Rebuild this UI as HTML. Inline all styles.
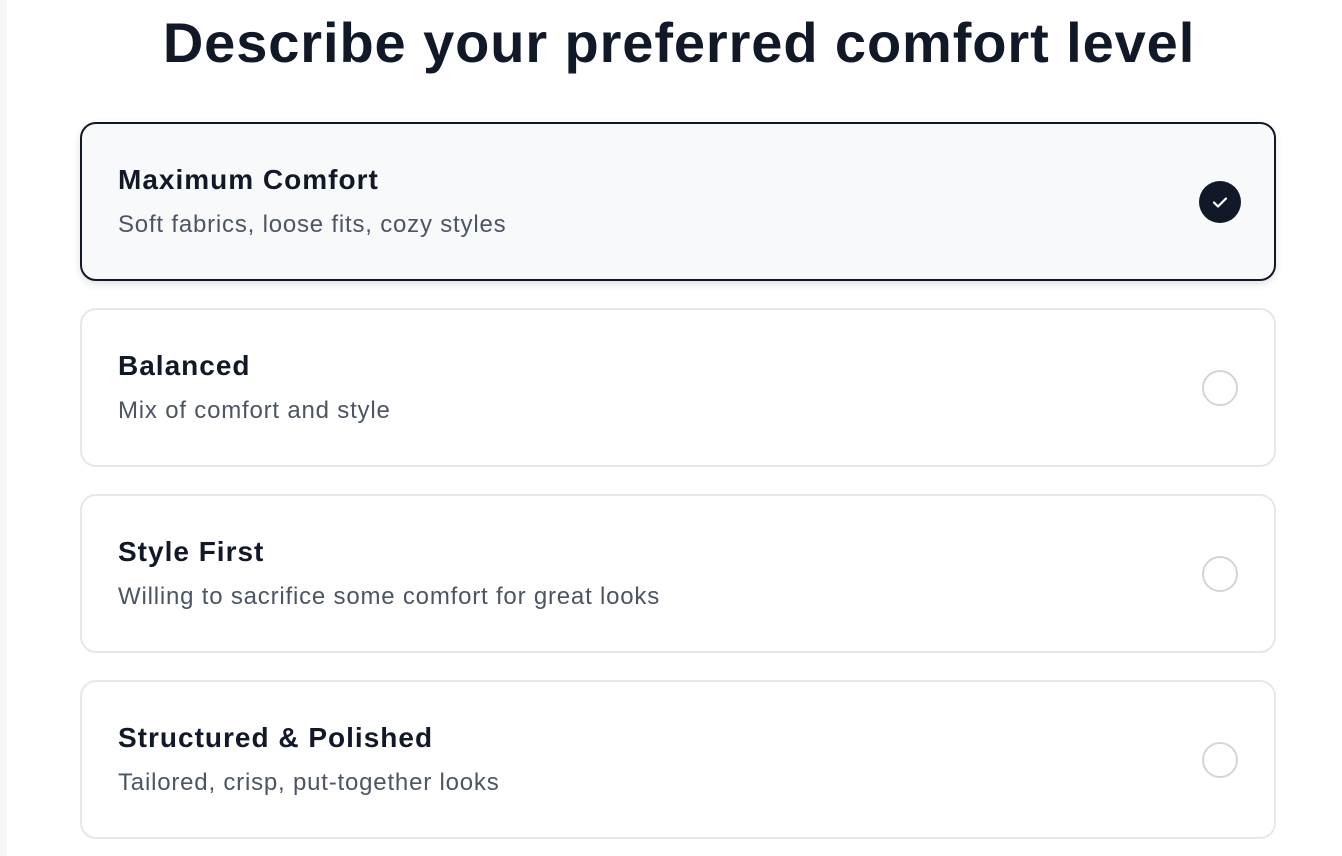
<!DOCTYPE html>
<html><head><meta charset="utf-8"><style>
*{margin:0;padding:0;box-sizing:border-box}
body{width:1342px;height:856px;background:#fff;font-family:"Liberation Sans",sans-serif;position:relative;overflow:hidden}
.strip{position:absolute;left:0;top:0;width:7px;height:856px;background:#f6f7f9}
h1{position:absolute;left:0;width:1358px;top:10px;text-align:center;font-size:56px;font-weight:bold;color:#111827;letter-spacing:0.9px;line-height:66px}
.card{position:absolute;left:80px;width:1196px;height:159px;border:2px solid #e5e7eb;border-radius:16px;background:#fff}
.card.sel{border-color:#111827;background:#f8f9fb;box-shadow:0 3px 8px rgba(0,0,0,.12)}
.t{position:absolute;left:36px;top:40px;font-size:28px;font-weight:bold;color:#111827;letter-spacing:1px}
.s{position:absolute;left:36px;top:87px;font-size:24px;color:#4b5563;letter-spacing:0.8px}
.r{position:absolute;left:1120px;top:60px;width:36px;height:36px;border:2px solid #d1d5db;border-radius:50%}
.c{position:absolute;left:1117px;top:57px;width:42px;height:42px;border-radius:50%;background:#111827}
</style></head><body>
<div class="strip"></div>
<h1>Describe your preferred comfort level</h1>
<div class="card sel" style="top:122px"><div class="t">Maximum Comfort</div><div class="s">Soft fabrics, loose fits, cozy styles</div>
<div class="c"><svg width="42" height="42" viewBox="0 0 42 42"><path d="M15 21.5l4 4 8-8" stroke="#fff" stroke-width="2.2" fill="none" stroke-linecap="round" stroke-linejoin="round"/></svg></div></div>
<div class="card" style="top:308px"><div class="t">Balanced</div><div class="s">Mix of comfort and style</div><div class="r"></div></div>
<div class="card" style="top:494px"><div class="t">Style First</div><div class="s">Willing to sacrifice some comfort for great looks</div><div class="r"></div></div>
<div class="card" style="top:680px"><div class="t">Structured &amp; Polished</div><div class="s">Tailored, crisp, put-together looks</div><div class="r"></div></div>
</body></html>
